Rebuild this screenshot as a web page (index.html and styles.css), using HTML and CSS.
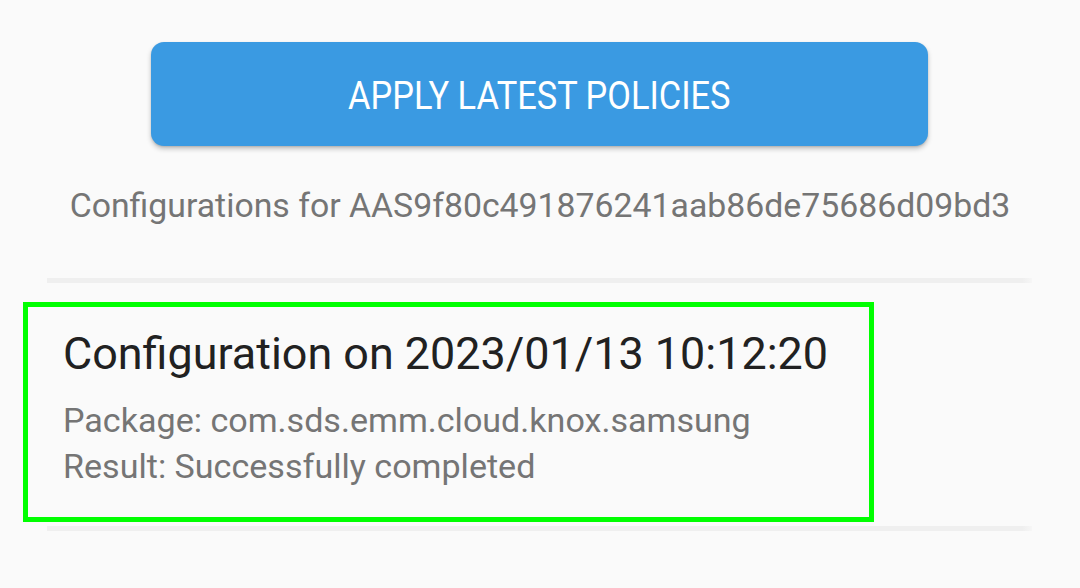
FILE: index.html
```html
<!DOCTYPE html>
<html>
<head>
<meta charset="utf-8">
<link rel="stylesheet" href="styles.css">
</head>
<body>
<div class="screen">
  <div class="actions">
    <button class="apply-btn"><span class="apply-label">APPLY LATEST POLICIES</span></button>
  </div>
  <p class="subtitle">Configurations for AAS9f80c491876241aab86de75686d09bd3</p>
  <div class="list">
    <div class="divider"></div>
    <div class="item">
      <div class="item-title">Configuration on 2023/01/13 10:12:20</div>
      <div class="item-line">Package: com.sds.emm.cloud.knox.samsung</div>
      <div class="item-line">Result: Successfully completed</div>
      <div class="highlight"></div>
    </div>
    <div class="divider"></div>
  </div>
</div>
</body>
</html>
```

FILE: styles.css
```css
html, body {
  margin: 0;
  padding: 0;
  background: #fafafa;
}
body {
  width: 1080px;
  height: 588px;
  overflow: hidden;
  font-family: Roboto, "Noto Sans", sans-serif;
}
.screen {
  display: flex;
  flex-direction: column;
}
.actions {
  display: flex;
  justify-content: center;
  padding-top: 42px;
  padding-right: 1px;
}
.apply-btn {
  width: 777px;
  height: 104px;
  border: none;
  border-radius: 13px;
  background: #3a9ae2;
  color: #ffffff;
  font-family: Roboto, sans-serif;
  font-size: 38px;
  line-height: 40px;
  padding: 4px 0 0 0;
  box-shadow: 0 3px 5px rgba(0, 0, 0, 0.22), 0 1px 2px rgba(0, 0, 0, 0.12);
  cursor: pointer;
  display: flex;
  align-items: center;
  justify-content: center;
}
.apply-label {
  display: inline-block;
  transform: scaleX(0.905);
  white-space: nowrap;
}
.subtitle {
  margin: 40px 0 0 0;
  text-align: center;
  font-size: 33.8px;
  line-height: 40px;
  color: #757575;
}
.list {
  margin: 52px 48px 0 47px;
  display: flex;
  flex-direction: column;
}
.divider {
  height: 5px;
  background: linear-gradient(to right, #efefef 0, #efefef 99%, #f6f6f6 100%);
}
.item {
  position: relative;
  padding: 46px 0 37px 16px;
}
.item-title {
  font-size: 44.9px;
  line-height: 50px;
  color: #212121;
  margin-bottom: 18px;
}
.item-line {
  font-size: 34.1px;
  line-height: 46px;
  color: #757575;
}
.highlight {
  position: absolute;
  left: -24px;
  top: 19px;
  width: 841px;
  height: 210px;
  border: 5px solid #00ff00;
}
```
